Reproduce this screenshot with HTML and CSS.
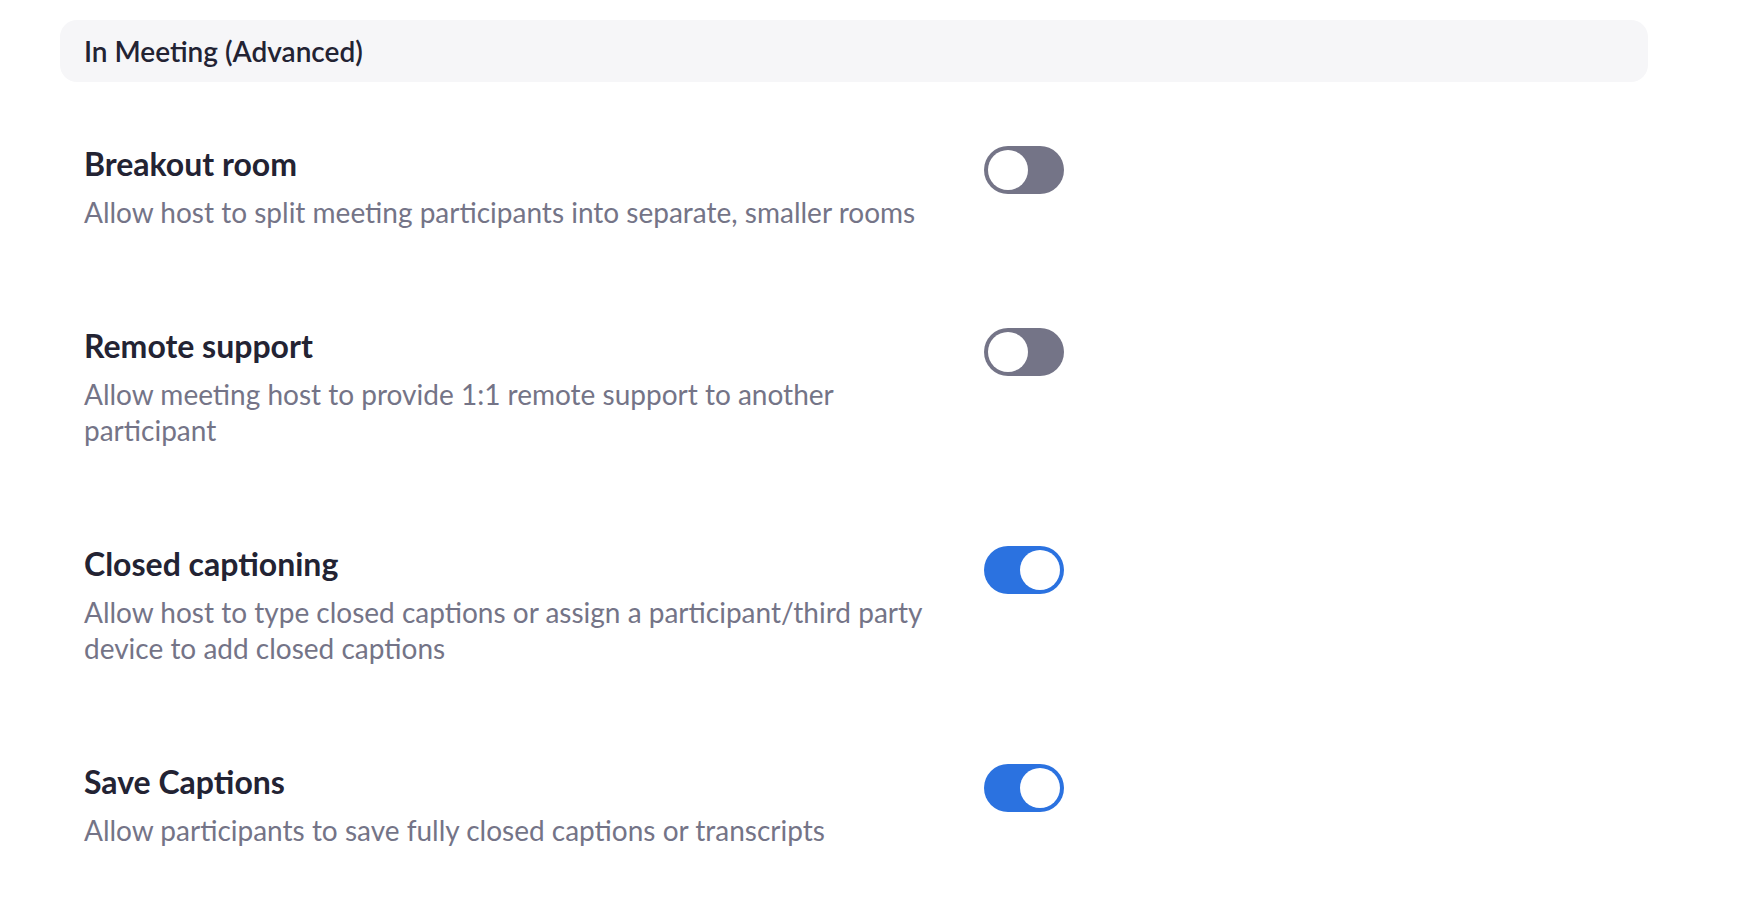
FILE: index.html
```html
<!DOCTYPE html>
<html lang="en">
<head>
    <meta charset="UTF-8">
    <title>In Meeting (Advanced)</title>
    <link rel="stylesheet" href="styles.css">
</head>
<body>
    <div class="settings">
        <div class="section-title">In Meeting (Advanced)</div>

        <div class="setting-row">
            <div class="setting-text">
                <div class="setting-name">Breakout room</div>
                <div class="setting-desc">Allow host to split meeting participants into separate, smaller rooms</div>
            </div>
            <div class="toggle"><span class="knob"></span></div>
        </div>

        <div class="setting-row">
            <div class="setting-text">
                <div class="setting-name">Remote support</div>
                <div class="setting-desc">Allow meeting host to provide 1:1 remote support to another participant</div>
            </div>
            <div class="toggle"><span class="knob"></span></div>
        </div>

        <div class="setting-row">
            <div class="setting-text">
                <div class="setting-name">Closed captioning</div>
                <div class="setting-desc">Allow host to type closed captions or assign a participant/third party device to add closed captions</div>
            </div>
            <div class="toggle on"><span class="knob"></span></div>
        </div>

        <div class="setting-row">
            <div class="setting-text">
                <div class="setting-name">Save Captions</div>
                <div class="setting-desc">Allow participants to save fully closed captions or transcripts</div>
            </div>
            <div class="toggle on"><span class="knob"></span></div>
        </div>
    </div>
</body>
</html>
```

FILE: styles.css
```css
body {
    margin: 0;
    background: #fff;
    font-family: Lato, "Open Sans", sans-serif;
    color: #232333;
}
.settings {
    width: 1588px;
    margin-left: 60px;
    padding-top: 20px;
}
.section-title {
    height: 62px;
    box-sizing: border-box;
    padding-left: 24px;
    background: #f6f6f8;
    border-radius: 17px;
    font-size: 28px;
    font-weight: 600;
    line-height: 62px;
    color: #232333;
}
.setting-row {
    display: flex;
    align-items: flex-start;
    padding: 0 24px;
    margin-top: 62px;
}
.setting-row + .setting-row {
    margin-top: 96px;
}
.setting-text {
    width: 880px;
    margin-right: 20px;
}
.setting-name {
    font-size: 32px;
    font-weight: 700;
    line-height: 40px;
    margin-bottom: 10px;
}
.setting-desc {
    font-size: 28px;
    line-height: 36px;
    color: #747487;
}
.toggle {
    width: 80px;
    height: 48px;
    margin-top: 2px;
    box-sizing: border-box;
    border-radius: 24px;
    background: #747487;
    padding: 4px;
    display: flex;
}
.toggle .knob {
    width: 40px;
    height: 40px;
    border-radius: 50%;
    background: #fff;
}
.toggle.on {
    background: #2b72e0;
    justify-content: flex-end;
}
```
